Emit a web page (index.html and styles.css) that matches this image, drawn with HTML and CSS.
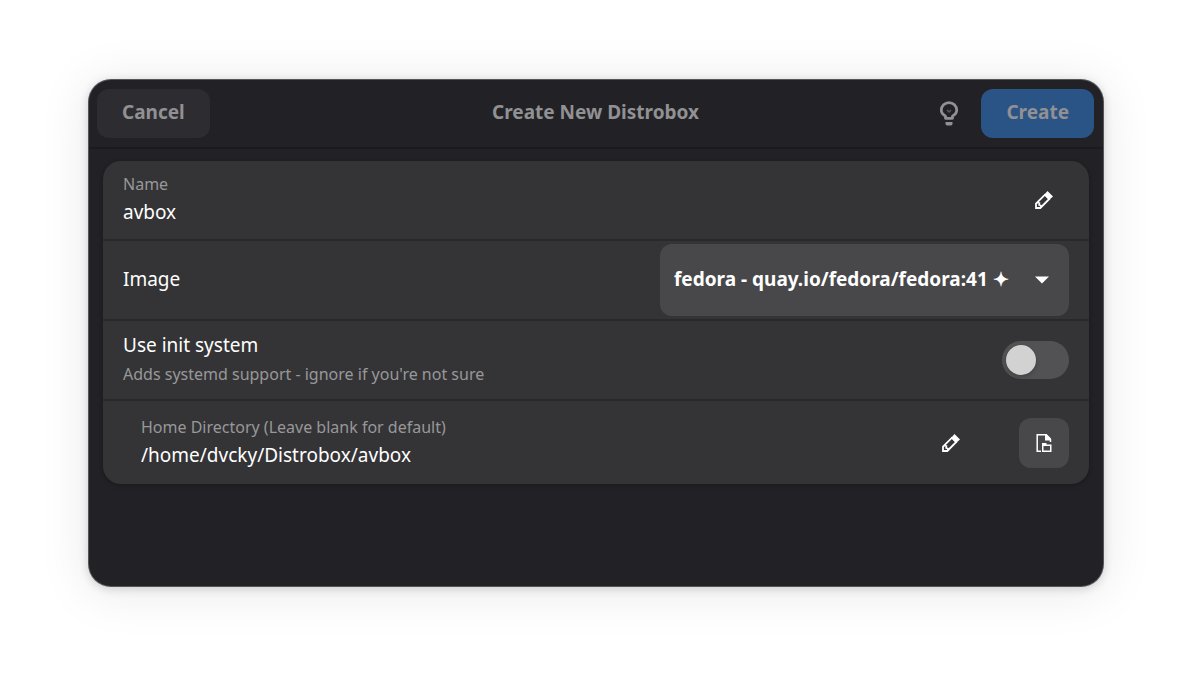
FILE: index.html
```html
<!DOCTYPE html>
<html lang="en">
<head>
<meta charset="utf-8">
<meta name="viewport" content="width=device-width, initial-scale=1">
<title>Create New Distrobox</title>
<link rel="stylesheet" href="styles.css">
</head>
<body>
<form class="window">
  <header class="headerbar">
    <button type="button" class="btn btn-cancel">Cancel</button>
    <h1 class="title">Create New Distrobox</h1>
    <div class="header-end">
      <button type="button" class="btn-flat" aria-label="Tips">
        <svg class="bulb" viewBox="0 0 20 26" aria-hidden="true">
          <path d="M6.500 17.300v-2.200C4 13.700 2.300 11.900 2.300 9.300a7.700 7.700 0 0 1 15.400 0c0 2.600-1.700 4.400-4.200 5.800v2.200z" fill="none" stroke="currentColor" stroke-width="2.800" stroke-linejoin="round"/>
          <path d="M8 9l2 2 2-2" fill="none" stroke="currentColor" stroke-width="1.500" opacity=".5"/>
          <path d="M6.500 21h7v1.800q0 1.700-1.700 1.700H8.200q-1.700 0-1.700-1.700z" fill="currentColor"/>
        </svg>
      </button>
      <button type="submit" class="btn btn-create">Create</button>
    </div>
  </header>
  <main class="content">
    <div class="list">
      <div class="row">
        <div class="field">
          <label class="caption" for="name">Name</label>
          <input class="entry" id="name" type="text" value="avbox">
        </div>
        <svg class="pencil pencil-end" viewBox="0 0 18 18" aria-hidden="true">
          <path d="M1 17v-4.300L10 3.700 14.300 8 5.300 17z" fill="none" stroke="currentColor" stroke-width="1.800"/>
          <path d="M9 4l3.500-4L18 5.500 14 9z" fill="currentColor"/>
          <path d="M2 11.500l2.500.500-.500 2 2 .500-.500 2" fill="none" stroke="currentColor" stroke-width="1.500"/>
        </svg>
      </div>
      <div class="row">
        <label class="row-title row-label" for="image">Image</label>
        <div class="dropdown">
          <select class="select" id="image">
            <option>fedora - quay.io/fedora/fedora:41 ✦</option>
          </select>
          <svg class="arrow" viewBox="0 0 14 8" aria-hidden="true"><path d="M0 .500h14L7 7.500z" fill="currentColor"/></svg>
        </div>
      </div>
      <div class="row">
        <label class="texts" for="init">
          <span class="row-title">Use init system</span>
          <span class="caption subtitle">Adds systemd support - ignore if you're not sure</span>
        </label>
        <input class="switch" id="init" type="checkbox" role="switch">
      </div>
      <div class="row row-last">
        <div class="field">
          <label class="caption" for="home">Home Directory (Leave blank for default)</label>
          <input class="entry" id="home" type="text" value="/home/dvcky/Distrobox/avbox">
        </div>
        <svg class="pencil" viewBox="0 0 18 18" aria-hidden="true">
          <path d="M1 17v-4.300L10 3.700 14.300 8 5.300 17z" fill="none" stroke="currentColor" stroke-width="1.800"/>
          <path d="M9 4l3.500-4L18 5.500 14 9z" fill="currentColor"/>
          <path d="M2 11.500l2.500.500-.500 2 2 .500-.500 2" fill="none" stroke="currentColor" stroke-width="1.500"/>
        </svg>
        <button type="button" class="btn-browse" aria-label="Choose folder">
          <svg class="doc" viewBox="0 0 16 18" aria-hidden="true">
            <path d="M5 17.300H1.200V.800H10L14.500 5.500V8" fill="none" stroke="currentColor" stroke-width="1.500"/>
            <path d="M9 0h1.500L15 4.500V6.500H9z" fill="currentColor"/>
            <path d="M6 9h4.500v1.500H15.500V18H6zM7.500 12v4.500h6.500V12z" fill="currentColor" fill-rule="evenodd"/>
          </svg>
        </button>
      </div>
    </div>
  </main>
</form>
</body>
</html>
```
FILE: styles.css
```css
* {
  box-sizing: border-box;
}

body {
  margin: 0;
  min-height: 100vh;
  padding: 80px 89px 98px;
  display: flex;
  background: #fff;
  color: #fff;
  font: 19px/28px "Noto Sans", sans-serif;
}

button,
input,
select {
  margin: 0;
  border: 0;
  font: inherit;
  color: inherit;
}

.window {
  flex: 1;
  min-width: 0;
  display: flex;
  flex-direction: column;
  border-radius: 22px;
  background: #222226;
  box-shadow: 0 0 0 1px #56565a, 0 2px 10px 1px rgba(0, 0, 0, .16), 0 4px 48px 6px rgba(0, 0, 0, .08);
}

.headerbar {
  display: grid;
  grid-template-columns: 1fr auto 1fr;
  align-items: center;
  padding: 9px 9px 9px 8px;
  border-bottom: 2px solid #1b1b1e;
  color: #919193;
}

.title {
  margin: 0;
  padding-bottom: 4px;
  font-size: 19px;
  line-height: 28px;
}

.btn {
  height: 49px;
  padding: 0 25px 4px;
  border-radius: 12px;
  font-weight: 700;
}

.btn-cancel {
  justify-self: start;
  background: #2d2d31;
}

.btn-create {
  background: #2b5486;
}

.header-end {
  display: flex;
  justify-content: flex-end;
  align-items: center;
  gap: 8px;
}

.btn-flat {
  display: flex;
  align-items: center;
  justify-content: center;
  width: 49px;
  height: 49px;
  padding: 0;
  background: none;
}

.bulb {
  width: 20px;
  height: 26px;
}

.content {
  padding: 12px 14px;
}

.list {
  border-radius: 18px;
  background: #343436;
  box-shadow: 0 1px 4px 1px rgba(0, 0, 0, .2);
}

.row {
  display: flex;
  align-items: center;
  justify-content: space-between;
  min-height: 80px;
  padding: 3px 20px;
  border-bottom: 2px solid #29292b;
}

.row-last {
  min-height: 83px;
  padding-left: 38px;
  border-bottom: 0;
}

.row-label {
  padding-bottom: 2px;
}

.field,
.texts {
  display: flex;
  flex-direction: column;
  flex: 1;
  min-width: 0;
}

.field {
  padding-bottom: 4px;
}

.caption {
  font-size: 16px;
  line-height: 28px;
  color: #98989a;
}

.subtitle {
  line-height: 30px;
}

.entry {
  width: 100%;
  height: 28px;
  padding: 0;
  background: none;
  outline: 0;
}

.pencil {
  flex: none;
  width: 18px;
  height: 18px;
}

.pencil-end {
  margin-right: 16px;
}

.dropdown {
  display: grid;
  align-items: center;
}

.select {
  grid-area: 1 / 1;
  height: 72px;
  padding: 0 60px 2px 14px;
  border-radius: 12px;
  background: #48484a;
  font-weight: 700;
  appearance: none;
}

.arrow {
  grid-area: 1 / 1;
  justify-self: end;
  width: 14px;
  height: 8px;
  margin-right: 20px;
  pointer-events: none;
}

.switch {
  flex: none;
  display: flex;
  align-items: center;
  width: 67px;
  height: 38px;
  padding: 0 4px;
  border-radius: 19px;
  background: #525254;
  appearance: none;
}

.switch::before {
  content: "";
  width: 30px;
  height: 30px;
  border-radius: 50%;
  background: #d2d2d2;
  box-shadow: 0 2px 4px rgba(0, 0, 0, .2);
}

.switch:checked {
  justify-content: flex-end;
  background: #3584e4;
}

.btn-browse {
  display: flex;
  align-items: center;
  justify-content: center;
  width: 50px;
  height: 50px;
  margin-left: 59px;
  padding: 0;
  border-radius: 12px;
  background: #48484a;
}

.doc {
  width: 16px;
  height: 18px;
}
```
